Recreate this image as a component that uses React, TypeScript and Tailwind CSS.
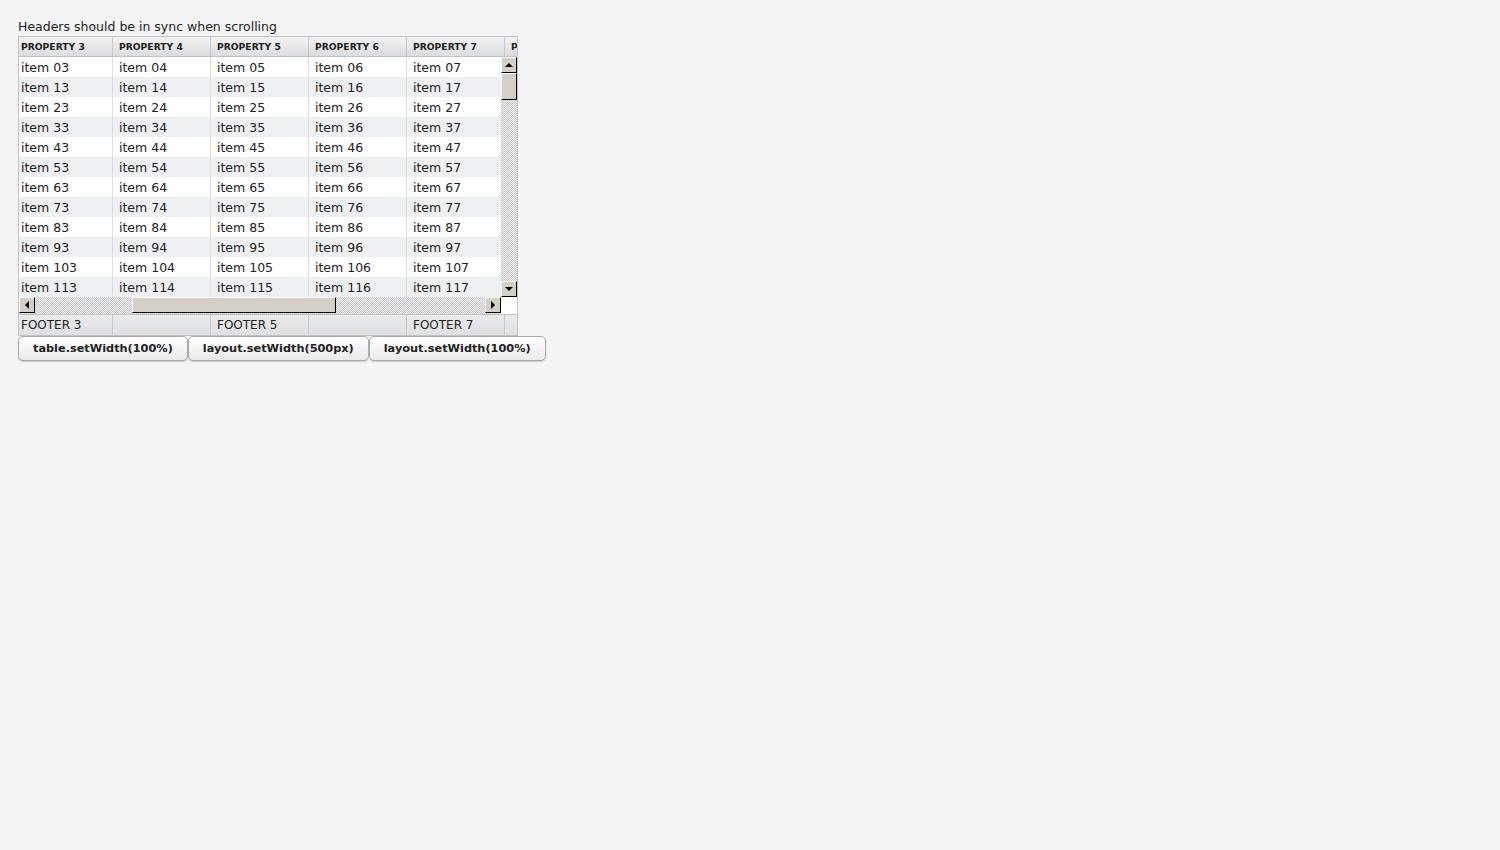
const cols = [3, 4, 5, 6, 7, 8];
const rows = [0, 1, 2, 3, 4, 5, 6, 7, 8, 9, 10, 11];

function pad(n: number) {
  return n < 10 ? `0${n}` : `${n}`;
}

function ScrollBtn({ dir }: { dir: "up" | "down" | "left" | "right" }) {
  const tri = {
    up: "border-l-[4px] border-r-[4px] border-b-[4px] border-l-transparent border-r-transparent border-b-black",
    down: "border-l-[4px] border-r-[4px] border-t-[4px] border-l-transparent border-r-transparent border-t-black",
    left: "border-t-[4px] border-b-[4px] border-r-[4px] border-t-transparent border-b-transparent border-r-black",
    right: "border-t-[4px] border-b-[4px] border-l-[4px] border-t-transparent border-b-transparent border-l-black",
  }[dir];
  return (
    <div className="w-[16px] h-[16px] shrink-0 bg-[#d4d0c8] border-t border-l border-t-white border-l-white border-r border-b border-r-black border-b-black flex items-center justify-center">
      <div className={`w-0 h-0 ${tri}`} />
    </div>
  );
}

export default function App() {
  return (
    <div className="min-h-screen bg-[#f4f4f4] pl-[18px] pt-[17px] text-[#222] font-['DejaVu_Sans',sans-serif]">
      <div className="h-[19px] text-[12.5px] leading-[19px]">Headers should be in sync when scrolling</div>

      {/* Table */}
      <div className="w-[500px] border border-[#c2c3c4] bg-white">
        {/* Header */}
        <div className="flex h-[20px] overflow-hidden border-b border-[#c2c3c4] bg-gradient-to-b from-[#f3f3f3] to-[#dcdddf]">
          {cols.map((c, i) => (
            <div
              key={c}
              className={`shrink-0 border-r border-[#c7c8ca] text-[9.2px] font-bold leading-[20px] whitespace-nowrap overflow-hidden ${
                i === 0 ? "w-[94px] pl-[2px]" : "w-[98px] pl-[6px]"
              }`}
            >
              PROPERTY {c}
            </div>
          ))}
        </div>

        {/* Body */}
        <div className="flex">
          <div className="w-[482px] overflow-hidden">
            {rows.map((r) => (
              <div key={r} className={`flex h-[20px] ${r % 2 ? "bg-[#eff0f1]" : "bg-white"}`}>
                {cols.map((c, i) => (
                  <div
                    key={c}
                    className={`shrink-0 border-r border-[#dcdddf] text-[12.5px] pt-px leading-[20px] whitespace-nowrap ${
                      i === 0 ? "w-[94px] pl-[2px]" : "w-[98px] pl-[6px]"
                    }`}
                  >
                    item {r === 0 ? pad(c) : `${r}${c}`}
                  </div>
                ))}
              </div>
            ))}
          </div>
          {/* Vertical scrollbar */}
          <div className="w-[16px] flex flex-col bg-[repeating-conic-gradient(#c4c4c4_0_25%,#f4f4f4_0_50%)] bg-[length:2px_2px]">
            <ScrollBtn dir="up" />
            <div className="h-[27px] bg-[#d4d0c8] border-t border-l border-t-white border-l-white border-r border-b border-r-black border-b-black" />
            <div className="flex-1" />
            <ScrollBtn dir="down" />
          </div>
        </div>

        {/* Horizontal scrollbar */}
        <div className="flex h-[17px]">
          <div className="w-[482px] flex bg-[repeating-conic-gradient(#c4c4c4_0_25%,#f4f4f4_0_50%)] bg-[length:2px_2px]">
            <ScrollBtn dir="left" />
            <div className="w-[97px]" />
            <div className="w-[204px] h-[16px] bg-[#d4d0c8] border-t border-l border-t-white border-l-white border-r border-b border-r-black border-b-black" />
            <div className="flex-1" />
            <ScrollBtn dir="right" />
          </div>
          <div className="w-[16px] bg-white" />
        </div>

        {/* Footer */}
        <div className="flex h-[21px] overflow-hidden border-t border-[#c2c3c4] bg-gradient-to-b from-[#ebebec] to-[#dfe0e1]">
          {cols.map((c, i) => (
            <div
              key={c}
              className={`shrink-0 border-r border-[#c7c8ca] text-[12px] leading-[20px] whitespace-nowrap ${
                i === 0 ? "w-[94px] pl-[2px]" : "w-[98px] pl-[6px]"
              }`}
            >
              {c % 2 ? `FOOTER ${c}` : ""}
            </div>
          ))}
        </div>
      </div>

      {/* Buttons */}
      <div className="flex">
        {["table.setWidth(100%)", "layout.setWidth(500px)", "layout.setWidth(100%)"].map((t) => (
          <button
            key={t}
            className="h-[25px] px-[14px] rounded-[5px] border border-[#a9a9a9] bg-gradient-to-b from-white to-[#ebebeb] shadow-[0_1px_1px_#c8c8c8] text-[11.3px] font-bold text-[#222] leading-[21px] font-['DejaVu_Sans',sans-serif]"
          >
            {t}
          </button>
        ))}
      </div>
    </div>
  );
}
